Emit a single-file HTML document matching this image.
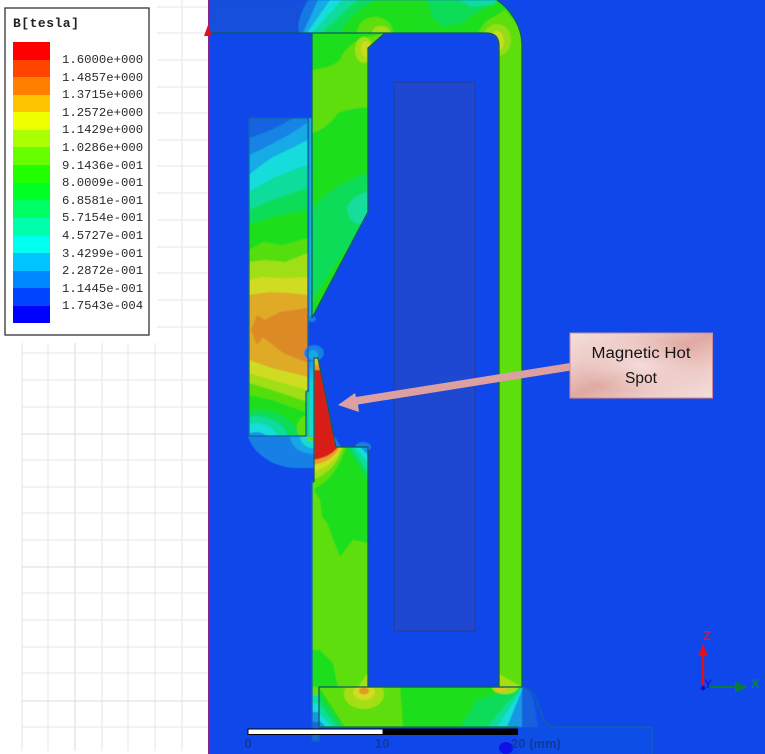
<!DOCTYPE html>
<html><head><meta charset="utf-8"><style>
html,body{margin:0;padding:0;background:#fff;width:765px;height:754px;overflow:hidden}
svg{display:block;position:absolute;left:0;top:0}
.l{font:12.3px "Liberation Mono",monospace;fill:#2a2a2a}
.s{font:bold 13px "Liberation Sans",sans-serif;fill:#103a9c}
</style></head><body>
<svg width="765" height="754" viewBox="0 0 765 754">
<defs>
<linearGradient id="pk" x1="0" y1="0" x2="1" y2="1"><stop offset="0" stop-color="#f4dedb"/><stop offset=".25" stop-color="#eeccc8"/><stop offset=".5" stop-color="#dfa9a2"/><stop offset=".75" stop-color="#eeccc8"/><stop offset="1" stop-color="#f4dedb"/></linearGradient>
<radialGradient id="gl"><stop offset="0" stop-color="#f8e6e4" stop-opacity=".85"/><stop offset="1" stop-color="#f8e6e4" stop-opacity="0"/></radialGradient>
<linearGradient id="st" x1="0" y1="0" x2="0" y2="1"><stop offset="0" stop-color="#1498e4"/><stop offset=".3" stop-color="#14d0d4"/><stop offset="1" stop-color="#14dcd0"/></linearGradient>
<clipPath id="mag"><path d="M249 118H308V390L306 392V436H249Z"/></clipPath>
<clipPath id="up"><path d="M312 33H385L368 48V212L312 318Z"/></clipPath>
<clipPath id="lp"><path d="M314 358H318L336 447H368V687H312V482H314Z"/></clipPath>
<clipPath id="yk"><path d="M209 0H497C512 10 522 28 522 45V75H499V46Q499 33 486 33H209Z"/></clipPath>
<clipPath id="bt"><path d="M319 687H522L522 727H319Z"/></clipPath>
<clipPath id="hl"><rect x="248" y="436.5" width="66" height="40"/></clipPath>
<filter id="bl" x="0" y="0" width="100%" height="100%"><feGaussianBlur stdDeviation="0.6"/></filter>
</defs>

<!-- paper grid -->
<g stroke="#e6e6e6" stroke-width="1.1" fill="none">
<path d="M157 7H208M157 33H208M157 60H208M157 87H208M157 113H208M157 140H208M157 166H208M157 193H208M157 220H208M157 247H208M157 273H208M157 300H208M157 327H208"/>
<path d="M22 353H208M22 380H208M22 407H208M22 460H208M22 487H208M22 513H208M22 540H208M22 593H208M22 620H208M22 647H208M22 673H208M22 727H208"/>
<path d="M22 343V751M48 343V751M102 343V751M128 343V751M155 343V751M182 0V751"/>
</g>
<g stroke="#e2e2e2" stroke-width="1.3" fill="none"><path d="M22 434H208M22 567H208M22 701H208M75 343V751"/></g>

<!-- field background -->
<rect x="209" y="0" width="556" height="754" fill="#0f47ea"/>

<g filter="url(#bl)">
<!-- under-curve area -->
<path d="M518 687H522C545 690 535 727 556 727H652V754H518Z" fill="#1150e6"/>
<path d="M520 688H524C536 692 534 712 538 727H520Z" fill="#1760dc"/>

<!-- top yoke -->
<g clip-path="url(#yk)">
<rect x="209" y="0" width="320" height="80" fill="#1450dc"/>
<path d="M299 33Q296 20 308 0H530V80H299Z" fill="#1478e2"/>
<path d="M303 33L318 0H530V80H303Z" fill="#14aae6"/>
<path d="M307 33L330 0H530V80H307Z" fill="#14dcdc"/>
<path d="M312 33L342 0H530V80H312Z" fill="#10dc9a"/>
<path d="M322 33L357 0H530V80H322Z" fill="#10dc58"/>
<path d="M340 33Q350 14 375 0H530V80H340Z" fill="#1ede1e"/>
<path d="M427 0L432 17L443 27L463 23L470 17L497 0Z" fill="#10dc58"/>
<path d="M460 0L470 7L493 5L498 0Z" fill="#10dc9a"/>
<ellipse cx="375" cy="33" rx="18" ry="16" fill="#5ede10"/>
<ellipse cx="381" cy="33" rx="9" ry="7" fill="#a6de14"/>
<path d="M478 33L485 22L505 10L530 40V80H495V33Z" fill="#5ede10"/>
<ellipse cx="497" cy="40" rx="14" ry="16" fill="#94de14"/>
<ellipse cx="497" cy="41" rx="7" ry="10" fill="#c8dc20"/>
</g>
<rect x="499" y="60" width="23" height="627" fill="#5ede10"/>

<!-- upper pole -->
<g clip-path="url(#up)">
<rect x="312" y="33" width="75" height="290" fill="#1ede1e"/>
<path d="M312 70Q332 68 340 60Q345 47 362 38L387 33V48L370 50V107Q350 108 338 113Q328 128 312 133Z" fill="#5ede10"/>
<ellipse cx="364" cy="50" rx="9" ry="13" fill="#a6de14"/>
<ellipse cx="366" cy="49" rx="5" ry="8" fill="#c8dc20"/>
<path d="M312 210Q330 185 368 173V240L345 250L312 300Z" fill="#10dc58"/>
<path d="M368 192Q352 195 347 208Q347 220 358 224L368 222Z" fill="#12dc9c"/>
</g>

<!-- magnet -->
<g clip-path="url(#mag)">
<rect x="249" y="118" width="60" height="320" fill="#1464e0"/>
<path d="M249 138Q275 130 293 118H310V440H249Z" fill="#1484e4"/>
<path d="M249 155Q265 148 283 138Q298 130 308 122V440H249Z" fill="#14aae6"/>
<path d="M249 175Q262 164 273 157Q292 148 308 140V440H249Z" fill="#14dcdc"/>
<path d="M249 192Q262 184 273 178Q292 170 308 165V440H249Z" fill="#10dc9a"/>
<path d="M249 210Q262 204 273 200Q292 193 308 188V440H249Z" fill="#10dc58"/>
<path d="M249 225Q262 220 273 217Q292 212 308 210V440H249Z" fill="#1ede1e"/>
<path d="M249 250L263 242L283 245L308 238V440H249Z" fill="#54de10"/>
<path d="M249 262L265 260L285 262L308 253V440H249Z" fill="#a0de14"/>
<path d="M249 280L262 277L285 278L308 277V440H249Z" fill="#d0dc20"/>
<path d="M249 295L270 292L290 293L308 295V440H249Z" fill="#dfaa28"/>
<path d="M251 330L257 315L265 320L280 312L308 308V363L283 353L263 337L257 345Z" fill="#dc8a28"/>
<path d="M249 360L272 368L308 377V440H249Z" fill="#d0dc20"/>
<path d="M249 373L272 380L308 390V440H249Z" fill="#a0de14"/>
<path d="M249 383L272 390L308 402V440H249Z" fill="#54de10"/>
<path d="M249 395L272 400L308 413V440H249Z" fill="#1ede1e"/>
<ellipse cx="256" cy="440" rx="44" ry="30" fill="#10dc58"/>
<ellipse cx="256" cy="440" rx="32" ry="24" fill="#10dc9a"/>
<ellipse cx="256" cy="440" rx="22" ry="17" fill="#14dcdc"/>
<ellipse cx="256" cy="440" rx="12" ry="8" fill="#1498e4"/>
<ellipse cx="306" cy="428" rx="9" ry="12" fill="#5ede10"/>
</g>

<!-- strip and halo -->
<rect x="309" y="118" width="3" height="202" fill="#18b0d8"/>
<ellipse cx="314" cy="353" rx="10" ry="8" fill="#1480e4"/>
<ellipse cx="313" cy="355" rx="5" ry="5" fill="#14a8e6"/>
<rect x="306.5" y="392" width="3" height="45" fill="#10dc58"/>
<rect x="309" y="361" width="5" height="76" fill="url(#st)"/>
<path d="M248 436H314V468H293Q283 467 273 463Q252 452 248 436Z" fill="#1480e4"/>
<g clip-path="url(#hl)">
<ellipse cx="313" cy="436" rx="23" ry="18" fill="#14a8e6"/>
<ellipse cx="313" cy="436" rx="13" ry="12" fill="#14dcd0"/>
<ellipse cx="311" cy="436" rx="5" ry="5" fill="#5ede10"/>
</g>
<ellipse cx="312" cy="319" rx="4" ry="3" fill="#1480e4"/>
<ellipse cx="363" cy="447" rx="8" ry="5" fill="#1480e4"/>
<path d="M332 432L341 447H330Z" fill="#1480e4"/>

<!-- lower pole -->
<g clip-path="url(#lp)">
<rect x="312" y="358" width="58" height="330" fill="#5ede10"/>
<path d="M336 447H368V543L353 540L340 557L327 523L322 517L320 500L314 490V447Z" fill="#1ede1e"/>
<path d="M312 650L320 650L333 663L338 687H312Z" fill="#1ede1e"/>
<path d="M368 673L358 687H368Z" fill="#a6de14"/>
<path d="M347 447L368 480V447Z" fill="#10dc58"/>
<path d="M351 447L368 473V447Z" fill="#10dc9a"/>
<path d="M355 447L368 463V447Z" fill="#14dcdc"/>
<path d="M360 447L368 455V447Z" fill="#1498e4"/>
<path d="M312 490L322 484Q338 472 346 447H312Z" fill="#5ede10"/>
<path d="M312 480Q335 472 343 447H312Z" fill="#a6de14"/>
<path d="M312 472Q335 466 341 447H312Z" fill="#d4dc20"/>
<path d="M312 465Q333 462 340 447H312Z" fill="#e8a028"/>
<path d="M312 460Q330 458 338 447H336L318 358H312Z" fill="#d81c14"/>
<path d="M313 358H319L321 370H313Z" fill="#e09a28"/>
<path d="M314 358H318L319 365L315 365Z" fill="#d8c820"/>
</g>

<!-- strip below the pole -->
<rect x="312" y="687" width="7" height="14" fill="#5ede10"/>
<rect x="312" y="695" width="7" height="10" fill="#10dc9a"/>
<rect x="312" y="703" width="7" height="10" fill="#14dcdc"/>
<rect x="312" y="712" width="7" height="10" fill="#1498e4"/>
<rect x="312" y="722" width="7" height="19" fill="#1268e0"/>

<!-- bottom yoke -->
<g clip-path="url(#bt)">
<rect x="319" y="687" width="204" height="40" fill="#1ede1e"/>
<path d="M319 687H400L403 727H345Z" fill="#5ede10"/>
<path d="M319 693L343 727H319Z" fill="#10dc58"/>
<path d="M319 703L337 727H319Z" fill="#10dc9a"/>
<path d="M319 713L332 727H319Z" fill="#14dcdc"/>
<path d="M319 720L326 727H319Z" fill="#1498e4"/>
<ellipse cx="364" cy="694" rx="20" ry="15" fill="#a6de14"/>
<ellipse cx="364" cy="692" rx="11" ry="8" fill="#d4dc20"/>
<ellipse cx="364" cy="691" rx="5" ry="3.5" fill="#e09a28"/>
<path d="M460 727L477 700L493 695L522 687V727Z" fill="#10dc58"/>
<path d="M487 727L507 703L517 693L522 687V727Z" fill="#10dc9a"/>
<path d="M497 727L513 703L522 688V727Z" fill="#14dcdc"/>
<path d="M507 727L522 690V727Z" fill="#1498e4"/>
<ellipse cx="505" cy="687" rx="13" ry="7" fill="#a6de14"/>
<ellipse cx="501" cy="688" rx="6" ry="4" fill="#dcc620"/>
</g>
<path d="M499 674L522 687H499Z" fill="#a6de14"/>
</g>

<!-- coil -->
<rect x="394" y="82" width="81" height="549" fill="#1f48d2" stroke="#2a4098" stroke-width="1.2"/>

<!-- outlines -->
<g fill="none" stroke="#0e5a5c" stroke-width="1.2">
<path d="M209 33H486Q499 33 499 46V687"/>
<path d="M497 0C512 10 522 28 522 45V687"/>
<path d="M385 33L368 48V212L312 318V33"/>
<path d="M314 482V358H318L336 447H368V687"/>
<path d="M319 727V687H522"/>
<path d="M319 727H518" stroke="#0e7a3c"/>
</g>
<g fill="none" stroke="#1264a8" stroke-width="1.2">
<path d="M308 118H249V436H306V392L308 390V118Z"/>
<path d="M314 482H312V741H319V727"/>
<path d="M522 687C545 690 535 727 556 727H652V754"/>
</g>

<!-- scale bar -->
<rect x="248" y="729" width="135" height="5.5" fill="#fff" stroke="#000" stroke-width="1"/>
<rect x="383" y="728.5" width="135" height="6.5" fill="#000"/>
<ellipse cx="506" cy="748" rx="7" ry="6" fill="#1010e8"/>
<text class="s" x="244.5" y="748">0</text>
<text class="s" x="375" y="748">10</text>
<text class="s" x="511" y="748">20 (mm)</text>

<!-- left edge -->
<rect x="208" y="0" width="2" height="754" fill="#8e1f8c"/>
<path d="M208 25L212 36H204Z" fill="#e0101c"/>

<!-- legend -->
<rect x="5" y="8" width="144" height="327" fill="#fff" stroke="#333" stroke-width="1.3"/>
<text x="13" y="27" style="font:bold 13px 'Liberation Mono',monospace;letter-spacing:.5px" fill="#222">B[tesla]</text>
<g>
<rect x="13" y="42" width="37" height="18" fill="#ff0000"/>
<rect x="13" y="60" width="37" height="17" fill="#ff4400"/>
<rect x="13" y="77" width="37" height="18" fill="#ff8000"/>
<rect x="13" y="95" width="37" height="17" fill="#ffc400"/>
<rect x="13" y="112" width="37" height="18" fill="#f0ff00"/>
<rect x="13" y="130" width="37" height="17" fill="#aaff00"/>
<rect x="13" y="147" width="37" height="18" fill="#66ff00"/>
<rect x="13" y="165" width="37" height="18" fill="#22ff00"/>
<rect x="13" y="183" width="37" height="17" fill="#00ff22"/>
<rect x="13" y="200" width="37" height="18" fill="#00ff66"/>
<rect x="13" y="218" width="37" height="18" fill="#00ffaa"/>
<rect x="13" y="236" width="37" height="17" fill="#00ffee"/>
<rect x="13" y="253" width="37" height="18" fill="#00c4ff"/>
<rect x="13" y="271" width="37" height="17" fill="#0088ff"/>
<rect x="13" y="288" width="37" height="18" fill="#0044ff"/>
<rect x="13" y="306" width="37" height="17" fill="#0000ff"/>
</g>
<text class="l" x="62" y="63">1.6000e+000</text>
<text class="l" x="62" y="81">1.4857e+000</text>
<text class="l" x="62" y="98">1.3715e+000</text>
<text class="l" x="62" y="116">1.2572e+000</text>
<text class="l" x="62" y="133">1.1429e+000</text>
<text class="l" x="62" y="151">1.0286e+000</text>
<text class="l" x="62" y="169">9.1436e-001</text>
<text class="l" x="62" y="186">8.0009e-001</text>
<text class="l" x="62" y="204">6.8581e-001</text>
<text class="l" x="62" y="221">5.7154e-001</text>
<text class="l" x="62" y="239">4.5727e-001</text>
<text class="l" x="62" y="257">3.4299e-001</text>
<text class="l" x="62" y="274">2.2872e-001</text>
<text class="l" x="62" y="292">1.1445e-001</text>
<text class="l" x="62" y="309">1.7543e-004</text>

<!-- arrow -->
<path d="M570 363L356 397L355 393L338 405L359 412L358 404.5L571 370.5Z" fill="#dca0a0"/>

<!-- callout -->
<rect x="571" y="335" width="143" height="65" fill="#5a3a9a" opacity=".55"/>
<rect x="570" y="333" width="142.5" height="65" fill="url(#pk)" stroke="#c98e98" stroke-width="1"/>
<rect x="580" y="338" width="122" height="55" fill="url(#gl)"/>
<text x="641" y="358" text-anchor="middle" style="font:15.5px 'Liberation Sans',sans-serif" fill="#141414" textLength="99" lengthAdjust="spacingAndGlyphs">Magnetic Hot</text>
<text x="641" y="383" text-anchor="middle" style="font:15.5px 'Liberation Sans',sans-serif" fill="#141414">Spot</text>

<!-- triad -->
<path d="M708 687H735" stroke="#0a7a3a" stroke-width="2"/>
<path d="M747 687L735 681V693Z" fill="#0a7a3a"/>
<path d="M703 688V655" stroke="#e0101c" stroke-width="2.4"/>
<path d="M703 644L708 656H698Z" fill="#e0101c"/>
<path d="M703 685L706 688L703 691L700 688Z" fill="#1010c8"/>
<text x="703" y="640" style="font:bold 13px 'Liberation Sans',sans-serif" fill="#c02050">Z</text>
<text x="704" y="688" style="font:bold 12px 'Liberation Sans',sans-serif" fill="#1818d8">Y</text>
<text x="751" y="688" style="font:bold 13px 'Liberation Sans',sans-serif" fill="#0a8050">X</text>
</svg>
</body></html>
